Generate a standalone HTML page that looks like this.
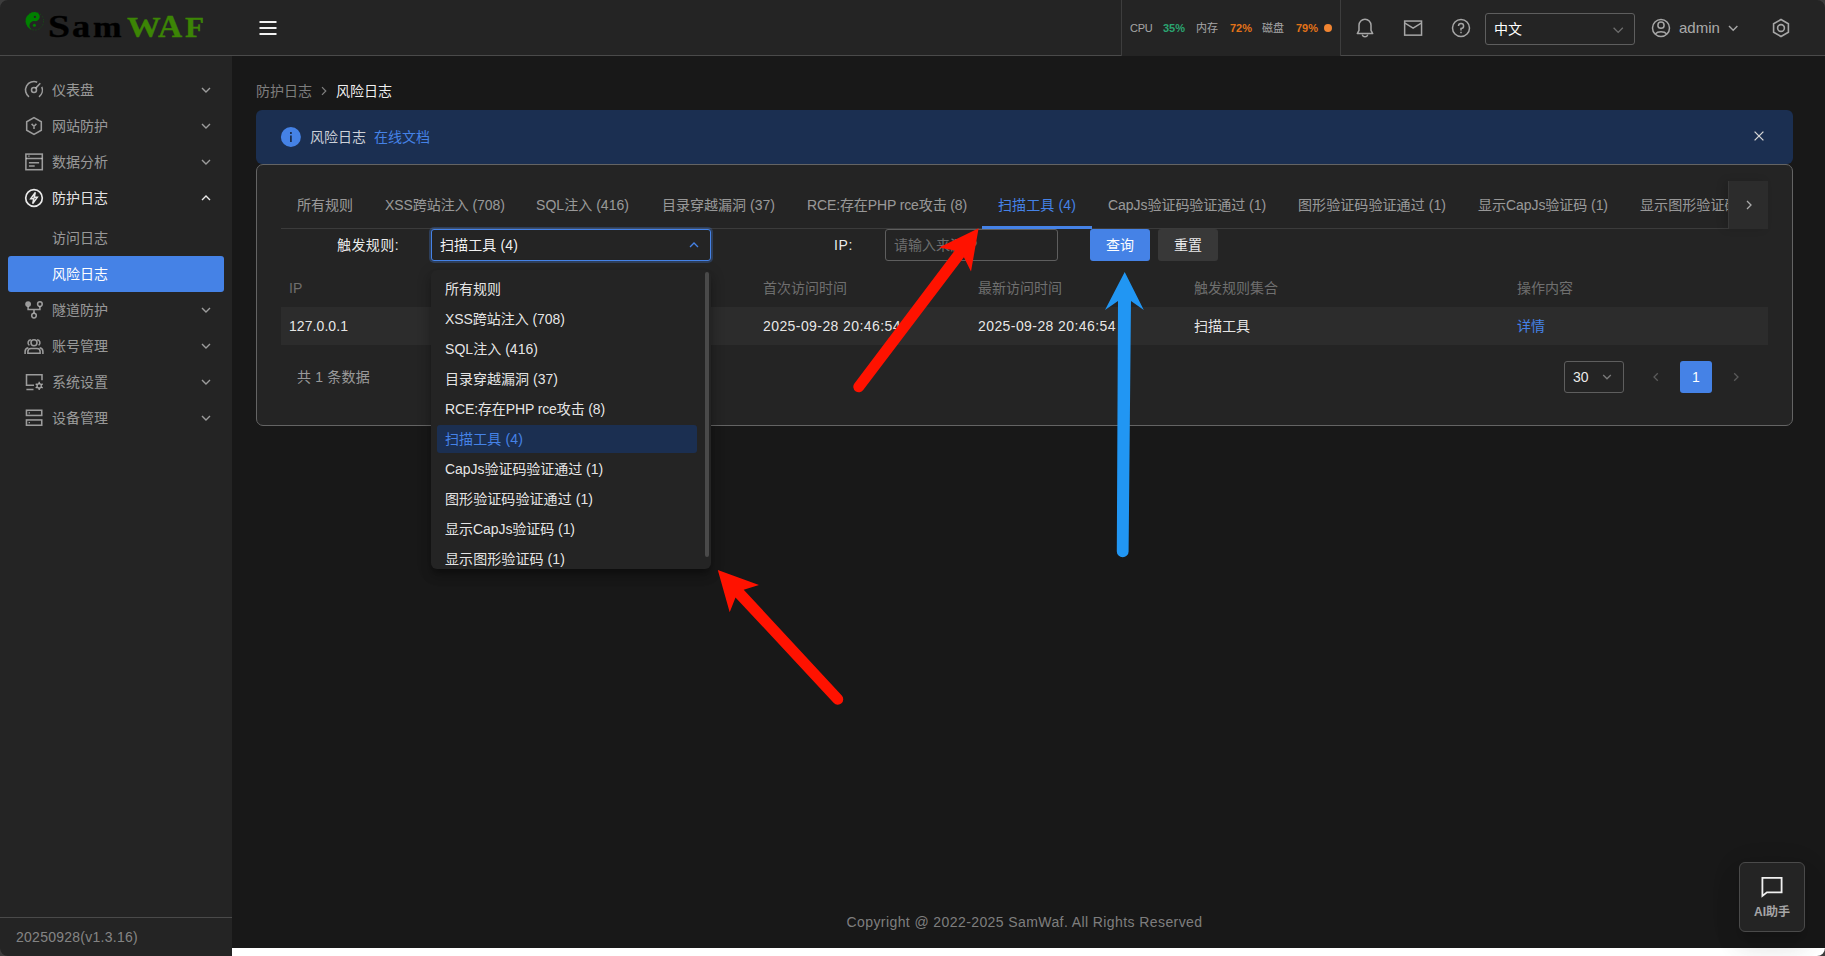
<!DOCTYPE html>
<html lang="zh-CN">
<head>
<meta charset="utf-8">
<title>SamWAF - 风险日志</title>
<style>
*{box-sizing:border-box;margin:0;padding:0}
html,body{width:1825px;height:956px;overflow:hidden;background:#fff}
body{font-family:"Liberation Sans","Noto Sans CJK SC",sans-serif;font-size:14px;color:rgba(255,255,255,.9);position:relative}
.abs{position:absolute}
svg{display:block}
/* app frame */
#app{position:absolute;left:0;top:0;width:1825px;height:956px;background:#181818;overflow:hidden}
#strip{position:absolute;left:232px;top:948px;width:1593px;height:8px;background:#fff;z-index:4}
#side{position:absolute;left:0;top:0;width:232px;height:956px;background:#242424;z-index:3}
#head{position:absolute;left:232px;top:0;width:1593px;height:56px;background:#242424;border-bottom:1px solid #4a4a4a}
#logo{position:absolute;left:0;top:0;width:232px;height:56px;border-bottom:1px solid #4a4a4a}
.lg{position:absolute;font:700 30px/30px "Liberation Serif",serif;transform-origin:0 0;white-space:nowrap;-webkit-text-stroke:.35px currentColor}
/* menu */
.mi{position:absolute;left:8px;width:216px;height:36px;border-radius:3px;color:rgba(255,255,255,.55);font-size:14px;line-height:36px}
.mi .ic{position:absolute;left:16px;top:8px;width:20px;height:20px}
.mi .tx{position:absolute;left:44px;top:0;white-space:nowrap}
.mi .ar{position:absolute;left:190px;top:10px;width:16px;height:16px}
.mi.on{color:rgba(255,255,255,.9)}
.mi.act{background:#4582e6;color:#fff}
#ver{position:absolute;left:0;top:917px;width:232px;height:39px;border-top:1px solid #4a4a4a;color:rgba(255,255,255,.45);font-size:14px;line-height:38px;padding-left:16px}
/* header right */
.hic{position:absolute;top:18px;width:20px;height:20px}
#stats{position:absolute;left:889px;top:0;width:220px;height:56px;background:#242424;border-left:1px solid #3d3d3d;border-right:1px solid #3d3d3d;font-size:11px;line-height:56px;color:rgba(255,255,255,.6)}
#stats span{position:absolute;top:0;white-space:nowrap}
#stats b{font-weight:700}
/* content */
.bc{position:absolute;top:80px;height:22px;line-height:22px;font-size:14px;white-space:nowrap}
#alert{position:absolute;left:256px;top:110px;width:1537px;height:54px;background:#1b2f51;border-radius:6px}
#card{position:absolute;left:256px;top:164px;width:1537px;height:262px;background:#242424;border:1px solid #646464;border-radius:7px}
.tab{position:absolute;top:193px;height:24px;line-height:24px;font-size:14px;color:rgba(255,255,255,.55);white-space:nowrap}
.tab.on{color:#4582e6}
.th{position:absolute;top:277px;height:22px;line-height:22px;font-size:14px;color:rgba(255,255,255,.35);white-space:nowrap}
.td{position:absolute;top:315px;height:22px;line-height:22px;font-size:14px;color:rgba(255,255,255,.9);white-space:nowrap}
.btn{position:absolute;top:229px;height:32px;line-height:32px;border-radius:3px;font-size:14px;text-align:center;color:#fff}
/* dropdown */
#dd{position:absolute;left:431px;top:270px;width:280px;height:299px;background:#242424;border-radius:6px;overflow:hidden;box-shadow:0 3px 14px 2px rgba(0,0,0,.12),0 8px 10px 1px rgba(0,0,0,.16),0 5px 5px -3px rgba(0,0,0,.22);z-index:5}
.op{position:absolute;left:6px;width:260px;height:28px;line-height:28px;padding-left:8px;border-radius:3px;font-size:14px;color:rgba(255,255,255,.9);white-space:nowrap}
.op.sel{background:#1b2f51;color:#4582e6}
#foot{position:absolute;left:232px;top:911px;width:1585px;height:22px;line-height:22px;text-align:center;font-size:14px;color:rgba(255,255,255,.45)}
#ai{position:absolute;left:1739px;top:862px;width:66px;height:70px;background:#242424;border:1px solid #4a4a4a;border-radius:6px;box-shadow:0 6px 30px 5px rgba(0,0,0,.05),0 16px 24px 2px rgba(0,0,0,.08),0 8px 10px -5px rgba(0,0,0,.12);z-index:6}
#arrows{position:absolute;left:0;top:0;z-index:8;pointer-events:none}
</style>
</head>
<body>
<div id="app">

<!-- HEADER -->
<div id="head">
  <svg class="abs" style="left:26px;top:18px" width="20" height="20" viewBox="0 0 20 20"><path d="M1.5 3h17v2h-17zM1.5 9h17v2h-17zM1.5 15h17v2h-17z" fill="#f2f2f2"/></svg>
  <div id="stats">
    <span style="left:8px;letter-spacing:-.3px">CPU</span><span style="left:41px;color:#2ba471"><b>35%</b></span>
    <span style="left:74px">内存</span><span style="left:108px;color:#e37318"><b>72%</b></span>
    <span style="left:140px">磁盘</span><span style="left:174px;color:#e37318"><b>79%</b></span>
    <i class="abs" style="left:202px;top:24px;width:8px;height:8px;border-radius:50%;background:#f08431"></i>
  </div>
  <svg class="hic" style="left:1123px" viewBox="0 0 20 20" fill="none" stroke="#a6a6a6" stroke-width="1.5"><path d="M2.3 15.6 4 12.4V7.2A6 6 0 0 1 16 7.2V12.4L17.7 15.6Z" stroke-linejoin="round"/><path d="M7.2 16.6A2.9 2.9 0 0 0 12.8 16.6"/></svg>
  <svg class="hic" style="left:1171px" viewBox="0 0 20 20" fill="none" stroke="#a6a6a6" stroke-width="1.5"><rect x="1.65" y="3.05" width="16.9" height="14.1"/><path d="M2 5.2 10.1 10.1 18.2 5.2"/></svg>
  <svg class="hic" style="left:1219px" viewBox="0 0 20 20" fill="none" stroke="#a6a6a6" stroke-width="1.5"><circle cx="10" cy="10" r="8.5"/><path d="M7.5 8A2.55 2.55 0 1 1 10 10.6V12.4"/><path d="M10 13.7V15.2"/></svg>
  <div class="abs" style="left:1253px;top:13px;width:150px;height:32px;border:1px solid #5e5e5e;border-radius:3px">
    <span class="abs" style="left:8px;top:5px;line-height:20px;font-size:14px;color:#fff">中文</span>
    <svg class="abs" style="left:124px;top:8px" width="16" height="16" viewBox="0 0 16 16" fill="none" stroke="#6e6e6e" stroke-width="1.3"><path d="M3.6 5.8 8.2 10.4 12.8 5.8"/></svg>
  </div>
  <svg class="hic" style="left:1419px" viewBox="0 0 20 20" fill="none" stroke="#a6a6a6" stroke-width="1.5"><circle cx="10" cy="10" r="8.5"/><circle cx="10" cy="7.2" r="3.1"/><path d="M4.3 16A6.4 3.9 0 0 1 15.7 16"/></svg>
  <span class="abs" style="left:1447px;top:17px;line-height:22px;font-size:15px;color:rgba(255,255,255,.62)">admin</span>
  <svg class="abs" style="left:1493px;top:20px" width="16" height="16" viewBox="0 0 16 16" fill="none" stroke="#a6a6a6" stroke-width="1.4"><path d="M4 6 8.2 10.2 12.4 6"/></svg>
  <svg class="hic" style="left:1539px" viewBox="0 0 20 20" fill="none" stroke="#a6a6a6" stroke-width="1.6"><path d="M10 1.5 17.4 5.75V14.25L10 18.5 2.6 14.25V5.75Z"/><circle cx="10" cy="10" r="3.4"/></svg>
</div>

<!-- SIDEBAR -->
<div id="side">
  <div id="logo">
    <svg class="abs" style="left:22px;top:8px" width="26" height="26" viewBox="22 8 26 26"><circle cx="34.6" cy="21.1" r="9" fill="none" stroke="#0b6a0b" stroke-width=".7" stroke-dasharray="1.4 1.6" opacity=".75"/><path d="M34.6 12.1A9 9 0 0 0 34.6 30.1A4.5 4.5 0 0 1 34.6 21.1A4.5 4.5 0 0 0 34.6 12.1Z" fill="#008000" transform="rotate(8 34.6 21.1)"/><circle cx="34.9" cy="16.9" r="1.15" fill="#242424"/><circle cx="34.4" cy="25.3" r="1.5" fill="#008000"/></svg>
<span class="lg" style="left:48.19px;top:10.75px;color:#000;transform:scale(1.319,1.030)">S</span>
    <span class="lg" style="left:71.99px;top:10.97px;color:#000;transform:scale(1.215,1.021)">a</span>
    <span class="lg" style="left:93.19px;top:11.78px;color:#000;transform:scale(1.143,0.993)">m</span>
    <span class="lg" style="left:126.55px;top:12.73px;color:#3c8505;transform:scale(1.124,0.975)">W</span>
    <span class="lg" style="left:158.06px;top:10.53px;color:#3c8505;transform:scale(1.118,1.051)">A</span>
    <span class="lg" style="left:185.38px;top:11.67px;color:#3c8505;transform:scale(1.043,1.005)">F</span>
  </div>
  <div class="mi " style="top:72px"><svg class="ic" viewBox="0 0 20 20" fill="none" stroke="currentColor" stroke-width="1.55"><circle cx="10" cy="10" r="2.5"/><path d="M11.7 8.1 16.3 3.2"/><path d="M13.2 2.2A8.43 8.43 0 0 0 5 16.8"/><path d="M15 16.8A8.43 8.43 0 0 0 17.8 6.9"/></svg><span class="tx">仪表盘</span><svg class="ar" viewBox="0 0 16 16" fill="none" stroke="currentColor" stroke-width="1.4"><path d="M4 6 8 10 12 6"/></svg></div>
  <div class="mi " style="top:108px"><svg class="ic" viewBox="0 0 20 20" fill="none" stroke="currentColor" stroke-width="1.55"><path d="M10 1.6 17.3 5.8V14.2L10 18.4 2.7 14.2V5.8Z"/><path d="M7.6 7.9 10 10.3 12.4 7.9M10 10.3V13" stroke-width="1.5"/></svg><span class="tx">网站防护</span><svg class="ar" viewBox="0 0 16 16" fill="none" stroke="currentColor" stroke-width="1.4"><path d="M4 6 8 10 12 6"/></svg></div>
  <div class="mi " style="top:144px"><svg class="ic" viewBox="0 0 20 20" fill="none" stroke="currentColor" stroke-width="1.55"><rect x="1.9" y="2.1" width="16.4" height="15.6"/><path d="M1.9 6.4H18.3M4.9 10.7H15.1M4.9 13.9H10.7"/><path d="M4.2 4.2H5.6" stroke-width="1.3"/></svg><span class="tx">数据分析</span><svg class="ar" viewBox="0 0 16 16" fill="none" stroke="currentColor" stroke-width="1.4"><path d="M4 6 8 10 12 6"/></svg></div>
  <div class="mi on" style="top:180px"><svg class="ic" viewBox="0 0 20 20" fill="none" stroke="currentColor" stroke-width="1.55"><circle cx="10" cy="10" r="8.3" stroke-width="1.7"/><path d="M11.3 4.4 6.7 10.7H9.8L8.7 15.6 13.3 9.3H10.2Z" stroke-width="1.5" stroke-linejoin="miter"/></svg><span class="tx">防护日志</span><svg class="ar" viewBox="0 0 16 16" fill="none" stroke="currentColor" stroke-width="1.4"><path d="M4 10 8 6 12 10"/></svg></div>
  <div class="mi " style="top:220px"><span class="tx">访问日志</span></div>
  <div class="mi act" style="top:256px"><span class="tx">风险日志</span></div>
  <div class="mi " style="top:292px"><svg class="ic" viewBox="0 0 20 20" fill="none" stroke="currentColor" stroke-width="1.55"><circle cx="4.1" cy="4.1" r="2.9" fill="currentColor" stroke="none"/><circle cx="15.9" cy="4.1" r="2.3"/><circle cx="10" cy="15.6" r="2.3"/><path d="M4.1 6.5V9.5H15.9V6.4M10 9.5V13.3"/></svg><span class="tx">隧道防护</span><svg class="ar" viewBox="0 0 16 16" fill="none" stroke="currentColor" stroke-width="1.4"><path d="M4 6 8 10 12 6"/></svg></div>
  <div class="mi " style="top:328px"><svg class="ic" viewBox="0 0 20 20" fill="none" stroke="currentColor" stroke-width="1.55"><circle cx="10" cy="6.7" r="3"/><path d="M3.9 17.3V15.6Q3.9 12.5 7 12.5H13Q16.1 12.5 16.1 15.6V17.3Z"/><path d="M6.9 3.8A3 3 0 0 0 5.4 9.3M1.1 17.9V15.6Q1.1 12.2 4.3 11.7"/><path d="M13.1 3.8A3 3 0 0 1 14.6 9.3M18.9 17.9V15.6Q18.9 12.2 15.7 11.7"/></svg><span class="tx">账号管理</span><svg class="ar" viewBox="0 0 16 16" fill="none" stroke="currentColor" stroke-width="1.4"><path d="M4 6 8 10 12 6"/></svg></div>
  <div class="mi " style="top:364px"><svg class="ic" viewBox="0 0 20 20" fill="none" stroke="currentColor" stroke-width="1.55"><path d="M18 8.2V2.7H2.5V13.3H10M2.4 17.5H9.5"/><circle cx="15.2" cy="13.9" r="2.1" stroke-width="1.4"/><path d="M15.2 9.8V11.4M15.2 16.4V18M11.65 11.85 13 12.65M17.4 15.15 18.75 15.95M11.65 15.95 13 15.15M17.4 12.65 18.75 11.85" stroke-width="1.5"/></svg><span class="tx">系统设置</span><svg class="ar" viewBox="0 0 16 16" fill="none" stroke="currentColor" stroke-width="1.4"><path d="M4 6 8 10 12 6"/></svg></div>
  <div class="mi " style="top:400px"><svg class="ic" viewBox="0 0 20 20" fill="none" stroke="currentColor" stroke-width="1.55"><rect x="2.45" y="2.25" width="15.3" height="5.2"/><rect x="2.45" y="11.95" width="15.3" height="5.3"/><path d="M4.6 4.9H6M4.6 14.6H6" stroke-width="1.3"/></svg><span class="tx">设备管理</span><svg class="ar" viewBox="0 0 16 16" fill="none" stroke="currentColor" stroke-width="1.4"><path d="M4 6 8 10 12 6"/></svg></div>
  <div id="ver"><span style="letter-spacing:0.26px;white-space:nowrap">20250928(v1.3.16)</span></div>
</div>

<!-- CONTENT -->
<div class="bc" style="left:256px;color:rgba(255,255,255,.45)">防护日志</div>
<div class="bc" style="left:336px;color:rgba(255,255,255,.95)">风险日志</div>

<svg class="abs" style="left:316px;top:83px" width="16" height="16" viewBox="0 0 16 16" fill="none" stroke="rgba(255,255,255,.45)" stroke-width="1.2"><path d="M6 4.2 9.8 8 6 11.8"/></svg>

<div id="alert">
  <svg class="abs" style="left:24px;top:16px" width="22" height="22" viewBox="0 0 22 22"><circle cx="10.9" cy="11" r="10" fill="#4582e6"/><path d="M10.9 6V7.9M10.9 9.6V16" stroke="#1b2f51" stroke-width="1.8"/></svg>
  <span class="abs" id="al1" style="left:54px;top:16px;line-height:22px;font-size:14px;color:rgba(255,255,255,.78);white-space:nowrap">风险日志</span>
  <span class="abs" id="al2" style="left:118px;top:16px;line-height:22px;font-size:14px;color:#4582e6;white-space:nowrap">在线文档</span>
  <svg class="abs" style="left:1495px;top:18px" width="16" height="16" viewBox="0 0 16 16" fill="none" stroke="#d6d6d6" stroke-width="1.3"><path d="M3.6 3.6 12.4 12.4M12.4 3.6 3.6 12.4"/></svg>
</div>
<div id="card"></div>

<!-- tabs -->
<div class="abs" style="left:281px;top:181px;width:1487px;height:48px;border-bottom:1px solid #3b3b3b;overflow:hidden"></div>
<div class="abs" style="left:281px;top:181px;width:1447px;height:47px;overflow:hidden">
  <span class="tab" style="letter-spacing:0.00px;left:16px;top:12px">所有规则</span>
  <span class="tab" style="letter-spacing:-0.05px;left:104px;top:12px">XSS跨站注入 (708)</span>
  <span class="tab" style="letter-spacing:0.04px;left:255px;top:12px">SQL注入 (416)</span>
  <span class="tab" style="letter-spacing:0.02px;left:381px;top:12px">目录穿越漏洞 (37)</span>
  <span class="tab" style="letter-spacing:-0.12px;left:526px;top:12px">RCE:存在PHP rce攻击 (8)</span>
  <span class="tab on" style="letter-spacing:0.12px;left:717px;top:12px">扫描工具 (4)</span>
  <span class="tab" style="letter-spacing:-0.04px;left:827px;top:12px">CapJs验证码验证通过 (1)</span>
  <span class="tab" style="letter-spacing:0.08px;left:1017px;top:12px">图形验证码验证通过 (1)</span>
  <span class="tab" style="letter-spacing:-0.05px;left:1197px;top:12px">显示CapJs验证码 (1)</span>
  <span class="tab" style="letter-spacing:0.09px;left:1359px;top:12px">显示图形验证码 (1)</span>
</div>
<div class="abs" style="left:982px;top:226px;width:110px;height:3px;background:#4582e6"></div>
<div class="abs" style="left:1728px;top:181px;width:40px;height:48px;background:#2c2c2c;border-left:1px solid #383838;box-shadow:-4px 0 8px rgba(0,0,0,.12)">
  <svg class="abs" style="left:12px;top:16px" width="16" height="16" viewBox="0 0 16 16" fill="none" stroke="rgba(255,255,255,.6)" stroke-width="1.3"><path d="M6 4 10 8 6 12"/></svg>
</div>

<!-- form -->
<span class="abs" style="letter-spacing:0.42px;left:337px;top:234px;line-height:22px;font-size:14px;color:rgba(255,255,255,.92);white-space:nowrap">触发规则:</span>
<div class="abs" style="left:431px;top:229px;width:280px;height:32px;border:1px solid #4582e6;border-radius:3px;box-shadow:0 0 0 2px rgba(69,130,230,.28);background:#242424">
  <span class="abs" style="letter-spacing:0.12px;left:8px;top:4px;line-height:22px;font-size:14px;color:rgba(255,255,255,.95);white-space:nowrap">扫描工具 (4)</span>
  <svg class="abs" style="left:254px;top:7px" width="16" height="16" viewBox="0 0 16 16" fill="none" stroke="#4582e6" stroke-width="1.3"><path d="M4 10 8 6 12 10"/></svg>
</div>
<span class="abs" style="letter-spacing:0.62px;left:834px;top:234px;line-height:22px;font-size:14px;color:rgba(255,255,255,.92);white-space:nowrap">IP:</span>
<div class="abs" style="left:885px;top:229px;width:173px;height:32px;border:1px solid #5e5e5e;border-radius:3px">
  <span class="abs" style="left:8px;top:4px;line-height:22px;font-size:14px;color:rgba(255,255,255,.35);white-space:nowrap">请输入来源IP</span>
</div>
<div class="btn" style="left:1090px;width:60px;background:#4582e6">查询</div>
<div class="btn" style="left:1158px;width:60px;background:#383838;color:rgba(255,255,255,.92)">重置</div>

<!-- table -->
<div class="abs" style="left:281px;top:307px;width:1487px;height:38px;background:#2c2c2c"></div>
<span class="th" style="left:289px">IP</span>
<span class="th" style="left:763px">首次访问时间</span>
<span class="th" style="left:978px">最新访问时间</span>
<span class="th" style="left:1194px">触发规则集合</span>
<span class="th" style="left:1517px">操作内容</span>
<span class="td" style="letter-spacing:0.07px;left:289px">127.0.0.1</span>
<span class="td" style="letter-spacing:0.42px;left:763px">2025-09-28 20:46:54</span>
<span class="td" style="letter-spacing:0.42px;left:978px">2025-09-28 20:46:54</span>
<span class="td" style="left:1194px">扫描工具</span>
<span class="td" style="left:1517px;color:#4582e6">详情</span>

<!-- pagination -->
<span class="abs" style="letter-spacing:0.20px;left:297px;top:366px;line-height:22px;font-size:14px;color:rgba(255,255,255,.55);white-space:nowrap">共 1 条数据</span>
<div class="abs" style="left:1564px;top:361px;width:60px;height:32px;border:1px solid #5e5e5e;border-radius:3px">
  <span class="abs" style="left:8px;top:4px;line-height:22px;font-size:14px;color:rgba(255,255,255,.92)">30</span>
  <svg class="abs" style="left:34px;top:7px" width="16" height="16" viewBox="0 0 16 16" fill="none" stroke="#7a7a7a" stroke-width="1.3"><path d="M4.2 6 8 9.8 11.8 6"/></svg>
</div>
<svg class="abs" style="left:1648px;top:369px" width="16" height="16" viewBox="0 0 16 16" fill="none" stroke="#5a5a5a" stroke-width="1.3"><path d="M9.8 4.2 6 8 9.8 11.8"/></svg>
<div class="abs" style="left:1680px;top:361px;width:32px;height:32px;border-radius:3px;background:#4582e6;color:#fff;text-align:center;line-height:32px;font-size:14px">1</div>
<svg class="abs" style="left:1728px;top:369px" width="16" height="16" viewBox="0 0 16 16" fill="none" stroke="#5a5a5a" stroke-width="1.3"><path d="M6.2 4.2 10 8 6.2 11.8"/></svg>

<!-- dropdown -->
<div id="dd">
  <div class="op" style="top:5px">所有规则</div>
  <div class="op" style="letter-spacing:-0.05px;top:35px">XSS跨站注入 (708)</div>
  <div class="op" style="letter-spacing:0.04px;top:65px">SQL注入 (416)</div>
  <div class="op" style="letter-spacing:0.02px;top:95px">目录穿越漏洞 (37)</div>
  <div class="op" style="letter-spacing:-0.12px;top:125px">RCE:存在PHP rce攻击 (8)</div>
  <div class="op sel" style="letter-spacing:0.12px;top:155px">扫描工具 (4)</div>
  <div class="op" style="letter-spacing:-0.04px;top:185px">CapJs验证码验证通过 (1)</div>
  <div class="op" style="letter-spacing:0.08px;top:215px">图形验证码验证通过 (1)</div>
  <div class="op" style="letter-spacing:-0.05px;top:245px">显示CapJs验证码 (1)</div>
  <div class="op" style="letter-spacing:0.09px;top:275px">显示图形验证码 (1)</div>
  <div class="abs" style="left:274px;top:2px;width:4px;height:285px;border-radius:2px;background:#4a4a4a"></div>
</div>

<div id="strip"></div>
<div id="foot"><span style="letter-spacing:0.41px;white-space:nowrap">Copyright @ 2022-2025 SamWaf. All Rights Reserved</span></div>
<div id="ai">
  <svg class="abs" style="left:20px;top:12px" width="24" height="24" viewBox="0 0 24 24" fill="none" stroke="#f0f0f0" stroke-width="1.8"><path d="M2.4 2.9H21.6V17.3H6.9L2.4 20.9Z" stroke-linejoin="miter"/></svg>
  <span class="abs" style="left:0;top:41px;width:64px;text-align:center;font-size:12px;line-height:16px;font-weight:700;color:rgba(255,255,255,.6);white-space:nowrap">AI助手</span>
</div>
<svg id="arrows" width="1825" height="956" viewBox="0 0 1825 956">
<path d="M978.6 228.3 L971.0 271.5 L963.9 257.3 L863.2 390.1 A5.5 5.5 0 0 1 854.4 383.5 L954.8 250.4 L939.1 247.4Z" fill="#ff1200"/>
<path d="M717.8 570.1 L759.0 585.0 L743.7 589.7 L841.8 695.5 A5.4 5.4 0 0 1 833.8 702.9 L735.5 597.4 L729.7 612.3Z" fill="#ff1200"/>
<path d="M1124.7 272.0 L1143.8 310.1 L1131.0 301.0 L1128.6 551.4 A5.9 5.9 0 0 1 1116.8 551.4 L1118.0 301.0 L1105.0 309.9Z" fill="#2196f3"/>
</svg>

<svg class="abs" style="left:0;top:0;z-index:9;pointer-events:none" width="1825" height="956" viewBox="0 0 1825 956"><path fill-rule="evenodd" fill="#3c3c3c" d="M0 0H1825V956H0ZM8 0A8 8 0 0 0 0 8V948A8 8 0 0 0 8 956H1817A8 8 0 0 0 1825 948V8A8 8 0 0 0 1817 0Z"/></svg>
</div>
</body>
</html>
